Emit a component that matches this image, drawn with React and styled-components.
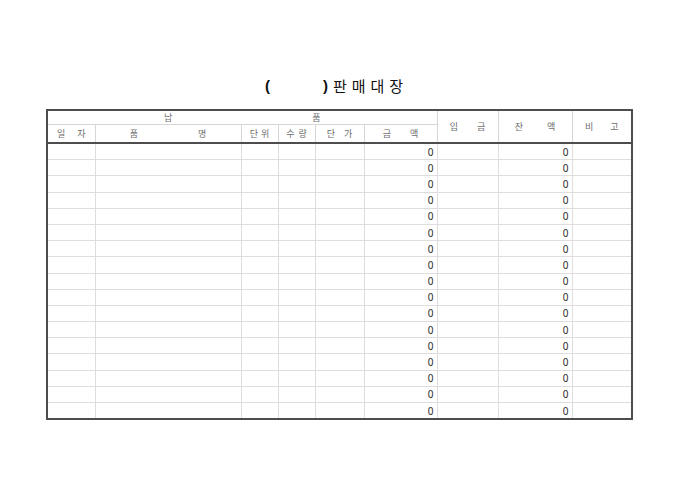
import React from 'react'
import styled, { createGlobalStyle } from 'styled-components'

const GlobalStyle = createGlobalStyle`
  html, body {
    margin: 0;
    padding: 0;
    background: #fff;
  }
  body {
    font-family: 'Noto Sans CJK KR', 'Noto Sans', sans-serif;
  }
`

const Page = styled.div`
  width: 680px;
  height: 481px;
  box-sizing: border-box;
  padding: 76px 47px 0 46px;
  display: flex;
  flex-direction: column;
  align-items: stretch;
`

const Title = styled.h1`
  margin: 0 0 13px;
  height: 20px;
  line-height: 20px;
  font-size: 15px;
  font-weight: 400;
  color: #111;
  display: flex;
  justify-content: center;
  align-items: center;
  padding-right: 6px;
`

const Paren = styled.span`
  font-family: 'Liberation Sans', Arial, sans-serif;
  font-weight: 700;
  font-size: 15px;
`

const Blank = styled.span`
  display: inline-block;
  width: 53px;
`

const TitleText = styled.span`
  margin-left: 5px;
  letter-spacing: 5px;
`

const Sheet = styled.table`
  width: 585px;
  table-layout: fixed;
  border-collapse: collapse;
  border: 2px solid #4d4d4d;
`

const HeadCell = styled.th`
  height: ${p => p.$h}px;
  padding: 0;
  font-size: 9px;
  font-weight: 400;
  color: #6e6e6e;
  border: 1px solid #d6d6d6;
  border-bottom: ${p => (p.$last ? '2px solid #4d4d4d' : '1px solid #d6d6d6')};
  vertical-align: middle;
`

const Spread = styled.span`
  display: flex;
  justify-content: center;
  align-items: center;
  gap: ${p => p.$gap}px;
  line-height: 1;
`

const Cell = styled.td`
  height: 15.2px;
  padding: 0 3px 0 0;
  border: 1px solid #dedede;
  text-align: right;
  font-family: 'Noto Sans', 'Liberation Sans', sans-serif;
  font-size: 10px;
  line-height: 1;
  color: #2b2b2b;
`

const widths = [48, 146, 37, 37, 49, 73, 61, 74, 60]

const Label = ({ text, gap }) => (
  <Spread $gap={gap}>
    {text.split('').map((c, i) => (
      <span key={i}>{c}</span>
    ))}
  </Spread>
)

const rows = Array.from({ length: 17 }, () => ({ amount: 0, balance: 0 }))

export default function App() {
  return (
    <>
      <GlobalStyle />
      <Page>
        <Title>
          <Paren>(</Paren>
          <Blank />
          <Paren>)</Paren>
          <TitleText>판매대장</TitleText>
        </Title>
        <Sheet>
          <colgroup>
            {widths.map((w, i) => (
              <col key={i} style={{ width: w }} />
            ))}
          </colgroup>
          <thead>
            <tr>
              <HeadCell colSpan={6} $h={13}>
                <Label text="납품" gap={140} />
              </HeadCell>
              <HeadCell rowSpan={2} $last>
                <Label text="입금" gap={19} />
              </HeadCell>
              <HeadCell rowSpan={2} $last>
                <Label text="잔액" gap={24} />
              </HeadCell>
              <HeadCell rowSpan={2} $last>
                <Label text="비고" gap={17} />
              </HeadCell>
            </tr>
            <tr>
              <HeadCell $h={17} $last>
                <Label text="일자" gap={12} />
              </HeadCell>
              <HeadCell $h={17} $last>
                <Label text="품명" gap={60} />
              </HeadCell>
              <HeadCell $h={17} $last>
                <Label text="단위" gap={3} />
              </HeadCell>
              <HeadCell $h={17} $last>
                <Label text="수량" gap={4} />
              </HeadCell>
              <HeadCell $h={17} $last>
                <Label text="단가" gap={9} />
              </HeadCell>
              <HeadCell $h={17} $last>
                <Label text="금액" gap={19} />
              </HeadCell>
            </tr>
          </thead>
          <tbody>
            {rows.map((r, i) => (
              <tr key={i}>
                <Cell />
                <Cell />
                <Cell />
                <Cell />
                <Cell />
                <Cell>{r.amount}</Cell>
                <Cell />
                <Cell>{r.balance}</Cell>
                <Cell />
              </tr>
            ))}
          </tbody>
        </Sheet>
      </Page>
    </>
  )
}
